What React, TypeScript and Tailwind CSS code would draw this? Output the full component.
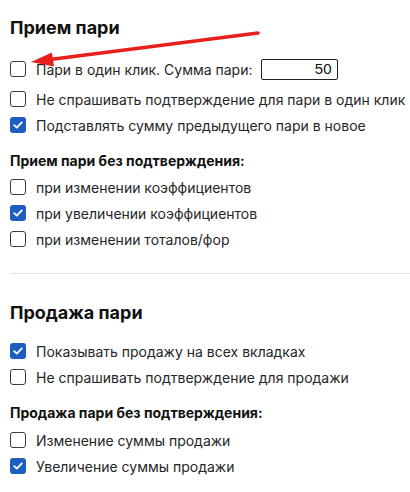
import React from "react";

const Box: React.FC<{ checked?: boolean }> = ({ checked }) =>
  checked ? (
    <span className="flex h-4 w-4 shrink-0 items-center justify-center rounded-[3px] bg-[#1d5fc0]">
      <svg width="10" height="8" viewBox="0 0 10 8" fill="none">
        <path d="M1.2 4.2 L3.8 6.6 L8.8 1.4" stroke="white" strokeWidth="1.8" strokeLinecap="round" strokeLinejoin="round" />
      </svg>
    </span>
  ) : (
    <span className="h-4 w-4 shrink-0 rounded-[3px] border-[1.5px] border-[#3a3a3a] bg-white" />
  );

const Row: React.FC<{ checked?: boolean; className?: string; children: React.ReactNode }> = ({
  checked,
  className = "h-[26px]",
  children,
}) => (
  <label className={`flex items-center gap-[10px] text-[14px] text-[#262626] ${className}`}>
    <Box checked={checked} />
    {children}
  </label>
);

export default function App() {
  return (
    <div
      className="relative w-[410px] h-[492px] bg-white pl-[10px] pt-4"
      style={{ fontFamily: "Inter, 'Noto Sans', sans-serif" }}
    >
      <h2 className="text-[18px] leading-6 font-bold text-[#111]">Прием пари</h2>

      <div className="mt-[14px]">
        <Row className="h-[30px]">
          <span>Пари в один клик. Сумма пари:</span>
          <span
            className="-ml-[2px] flex h-[21px] w-[77px] items-center justify-end rounded-[2px] border border-[#222] pr-[5px] text-[15px] text-[#111]"
            style={{ fontFamily: "'Liberation Sans', Arial, sans-serif" }}
          >
            50
          </span>
        </Row>
        <Row className="mt-[2px] h-[26px]">Не спрашивать подтверждение для пари в один клик</Row>
        <Row checked>Подставлять сумму предыдущего пари в новое</Row>
      </div>

      <h3 className="mt-[14px] text-[14px] leading-[18px] font-bold text-[#111]">Прием пари без подтверждения:</h3>
      <div className="mt-[4px]">
        <Row>при изменении коэффициентов</Row>
        <Row checked>при увеличении коэффициентов</Row>
        <Row>при изменении тоталов/фор</Row>
      </div>

      <div className="mt-[21px] h-px bg-[#e3e5e8]" />

      <h2 className="mt-[27px] text-[18px] leading-6 font-bold text-[#111]">Продажа пари</h2>
      <div className="mt-[13px]">
        <Row checked>Показывать продажу на всех вкладках</Row>
        <Row>Не спрашивать подтверждение для продажи</Row>
      </div>

      <h3 className="mt-[14px] text-[14px] leading-[18px] font-bold text-[#111]">Продажа пари без подтверждения:</h3>
      <div className="mt-[5px]">
        <Row>Изменение суммы продажи</Row>
        <Row checked>Увеличение суммы продажи</Row>
      </div>

      <svg className="pointer-events-none absolute left-0 top-0" width="410" height="120" viewBox="0 0 410 120">
        <line x1="258" y1="33" x2="50" y2="59.5" stroke="#e8201c" strokeWidth="3.6" strokeLinecap="round" />
        <polygon points="31,62 52,52.5 54,66.5" fill="#e8201c" />
      </svg>
    </div>
  );
}
